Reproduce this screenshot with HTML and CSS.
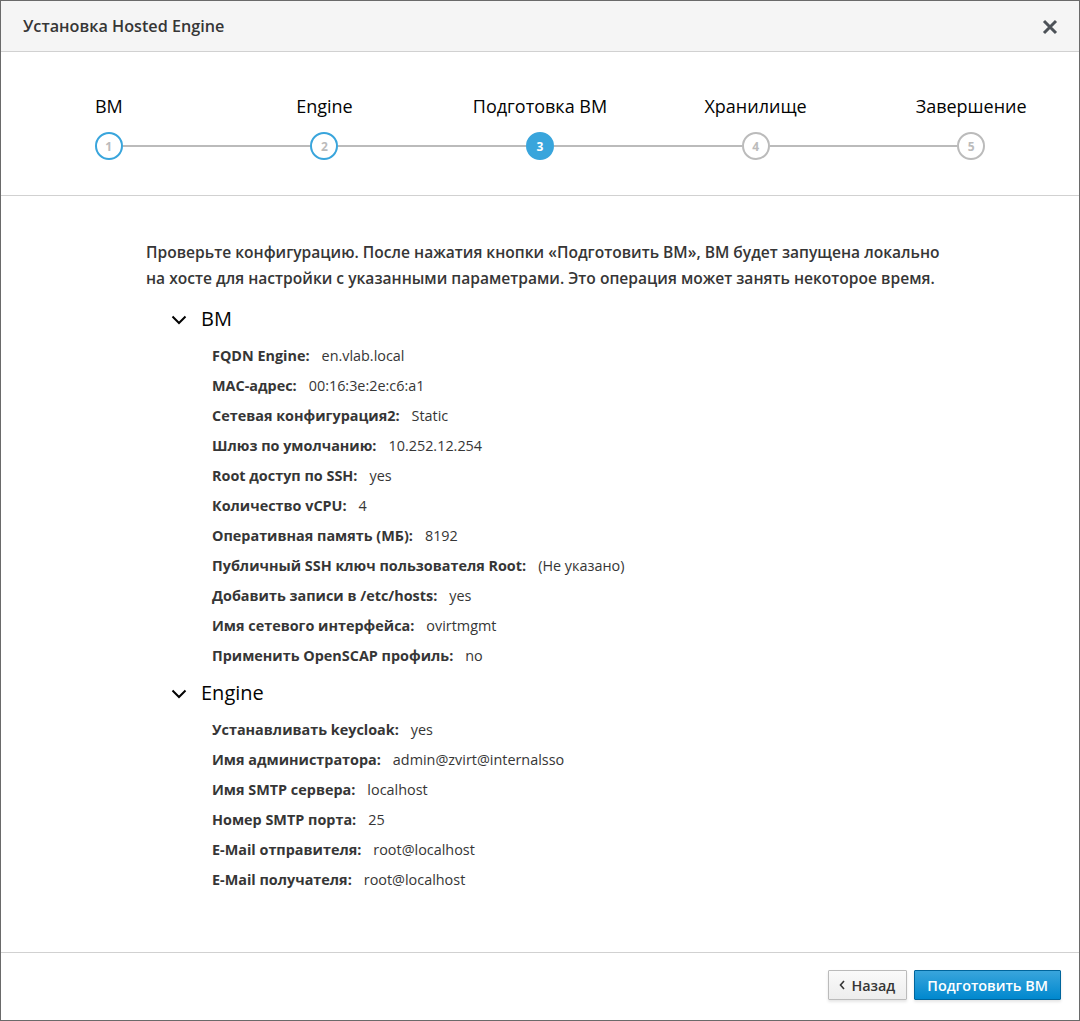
FILE: index.html
```html
<!DOCTYPE html>
<html lang="ru">
<head>
  <meta charset="UTF-8">
  <title>Установка Hosted Engine</title>
  <link rel="stylesheet" href="styles.css">
</head>
<body>
  <div class="modal">
    <div class="modal-header">
      <h4 class="modal-title">Установка Hosted Engine</h4>
      <button class="close" aria-label="Закрыть">
        <svg width="16" height="16" viewBox="0 0 16 16"><path d="M2 2 L14 14 M14 2 L2 14" stroke="#4d5258" stroke-width="3" fill="none"/></svg>
      </button>
    </div>

    <!-- wizard steps -->
    <div class="steps">
      <div class="step done first">
        <div class="step-label">ВМ</div>
        <div class="track"><span class="seg"></span><span class="circle">1</span><span class="seg"></span></div>
      </div>
      <div class="step done">
        <div class="step-label">Engine</div>
        <div class="track"><span class="seg"></span><span class="circle">2</span><span class="seg"></span></div>
      </div>
      <div class="step active">
        <div class="step-label">Подготовка ВМ</div>
        <div class="track"><span class="seg"></span><span class="circle">3</span><span class="seg"></span></div>
      </div>
      <div class="step">
        <div class="step-label">Хранилище</div>
        <div class="track"><span class="seg"></span><span class="circle">4</span><span class="seg"></span></div>
      </div>
      <div class="step last">
        <div class="step-label">Завершение</div>
        <div class="track"><span class="seg"></span><span class="circle">5</span><span class="seg"></span></div>
      </div>
    </div>

    <div class="modal-body">
      <p class="intro">Проверьте конфигурацию. После нажатия кнопки «Подготовить ВМ», ВМ будет запущена локально на хосте для настройки с указанными параметрами. Это операция может занять некоторое время.</p>

      <div class="section">
        <div class="section-title">
          <svg class="chevron" width="16" height="10" viewBox="0 0 16 10"><path d="M1.5 1.5 L8 8 L14.5 1.5" stroke="#030303" stroke-width="2" fill="none"/></svg>
          ВМ
        </div>
        <ul class="props">
          <li><b>FQDN Engine:</b><span>en.vlab.local</span></li>
          <li><b>MAC-адрес:</b><span>00:16:3e:2e:c6:a1</span></li>
          <li><b>Сетевая конфигурация2:</b><span>Static</span></li>
          <li><b>Шлюз по умолчанию:</b><span>10.252.12.254</span></li>
          <li><b>Root доступ по SSH:</b><span>yes</span></li>
          <li><b>Количество vCPU:</b><span>4</span></li>
          <li><b>Оперативная память (МБ):</b><span>8192</span></li>
          <li><b>Публичный SSH ключ пользователя Root:</b><span>(Не указано)</span></li>
          <li><b>Добавить записи в /etc/hosts:</b><span>yes</span></li>
          <li><b>Имя сетевого интерфейса:</b><span>ovirtmgmt</span></li>
          <li><b>Применить OpenSCAP профиль:</b><span>no</span></li>
        </ul>
      </div>

      <div class="section">
        <div class="section-title">
          <svg class="chevron" width="16" height="10" viewBox="0 0 16 10"><path d="M1.5 1.5 L8 8 L14.5 1.5" stroke="#030303" stroke-width="2" fill="none"/></svg>
          Engine
        </div>
        <ul class="props">
          <li><b>Устанавливать keycloak:</b><span>yes</span></li>
          <li><b>Имя администратора:</b><span>admin@zvirt@internalsso</span></li>
          <li><b>Имя SMTP сервера:</b><span>localhost</span></li>
          <li><b>Номер SMTP порта:</b><span>25</span></li>
          <li><b>E-Mail отправителя:</b><span>root@localhost</span></li>
          <li><b>E-Mail получателя:</b><span>root@localhost</span></li>
        </ul>
      </div>
    </div>

    <div class="modal-footer">
      <button class="btn btn-default">
        <svg width="6" height="10" viewBox="0 0 6 10"><path d="M5 1 L1.5 5 L5 9" stroke="#363636" stroke-width="1.6" fill="none"/></svg>
        Назад
      </button>
      <button class="btn btn-primary">Подготовить ВМ</button>
    </div>
  </div>
</body>
</html>
```

FILE: styles.css
```css
/* Hosted Engine wizard, review step */
body {
  margin: 0;
  font-family: 'Open Sans', 'Noto Sans', sans-serif;
  color: #363636;
  background: #fff;
}

.modal {
  width: 1080px;
  height: 1021px;
  box-sizing: border-box;
  border: 1px solid #6a6a6a;
  display: flex;
  flex-direction: column;
}

.modal-header {
  height: 50px;
  background: #f5f5f5;
  border-bottom: 1px solid #d1d1d1;
  display: flex;
  align-items: center;
  justify-content: space-between;
  padding: 0 21px 0 22px;
}

.modal-title {
  margin: 0;
  font-size: 16.2px;
  font-weight: 600;
  color: #363636;
}

.close {
  border: none;
  background: none;
  padding: 0;
  margin-top: 2px;
  cursor: pointer;
  display: flex;
}

/* steps */
.steps {
  display: flex;
  padding: 42px 0 35px;
  border-bottom: 1px solid #d1d1d1;
}

.step {
  flex: 1;
  display: flex;
  flex-direction: column;
  align-items: stretch;
}

.step-label {
  text-align: center;
  font-size: 18px;
  line-height: 24px;
  color: #030303;
  margin-bottom: 14px;
}

.track {
  display: flex;
  align-items: center;
}

.seg {
  flex: 1;
  height: 2px;
  background: #bbb;
}

.step.first .seg:first-child,
.step.last .seg:last-child {
  background: transparent;
}

.circle {
  width: 28px;
  height: 28px;
  box-sizing: border-box;
  border: 2px solid #bbb;
  border-radius: 50%;
  background: #fff;
  color: #bbb;
  font-size: 12px;
  font-weight: 700;
  display: flex;
  align-items: center;
  justify-content: center;
}

.step.done .circle {
  border-color: #39a5dc;
}

.step.active .circle {
  border-color: #39a5dc;
  background: #39a5dc;
  color: #fff;
}

/* body */
.modal-body {
  flex: 1;
  padding: 43px 20px 0 145px;
}

.intro {
  margin: 0 0 14px;
  max-width: 805px;
  font-size: 15.6px;
  font-weight: 600;
  line-height: 26px;
}

.section-title {
  display: flex;
  align-items: center;
  gap: 14px;
  padding-left: 25px;
  font-size: 20px;
  line-height: 28px;
  color: #030303;
}

.chevron {
  margin-top: 1px;
}

.props {
  list-style: none;
  margin: 8px 0 8px;
  padding: 0 0 0 66px;
}

.props li {
  font-size: 14.4px;
  line-height: 30px;
  display: flex;
  gap: 12px;
}

.props b {
  font-weight: 700;
}

/* footer */
.modal-footer {
  border-top: 1px solid #d1d1d1;
  display: flex;
  justify-content: flex-end;
  gap: 7px;
  padding: 17px 18px 20px;
}

.btn {
  height: 30px;
  box-sizing: border-box;
  padding: 0 12px;
  font-family: inherit;
  font-size: 14.4px;
  font-weight: 600;
  border-radius: 1px;
  display: flex;
  align-items: center;
  gap: 6px;
  cursor: pointer;
  box-shadow: 0 2px 3px rgba(3, 3, 3, 0.1);
}

.btn-default {
  background: linear-gradient(#fafafa, #ededed);
  border: 1px solid #bbb;
  color: #363636;
  padding: 0 11px 0 10px;
}

.btn-primary {
  background: linear-gradient(#39a5dc, #0088ce);
  border: 1px solid #00659c;
  color: #fff;
}
```
